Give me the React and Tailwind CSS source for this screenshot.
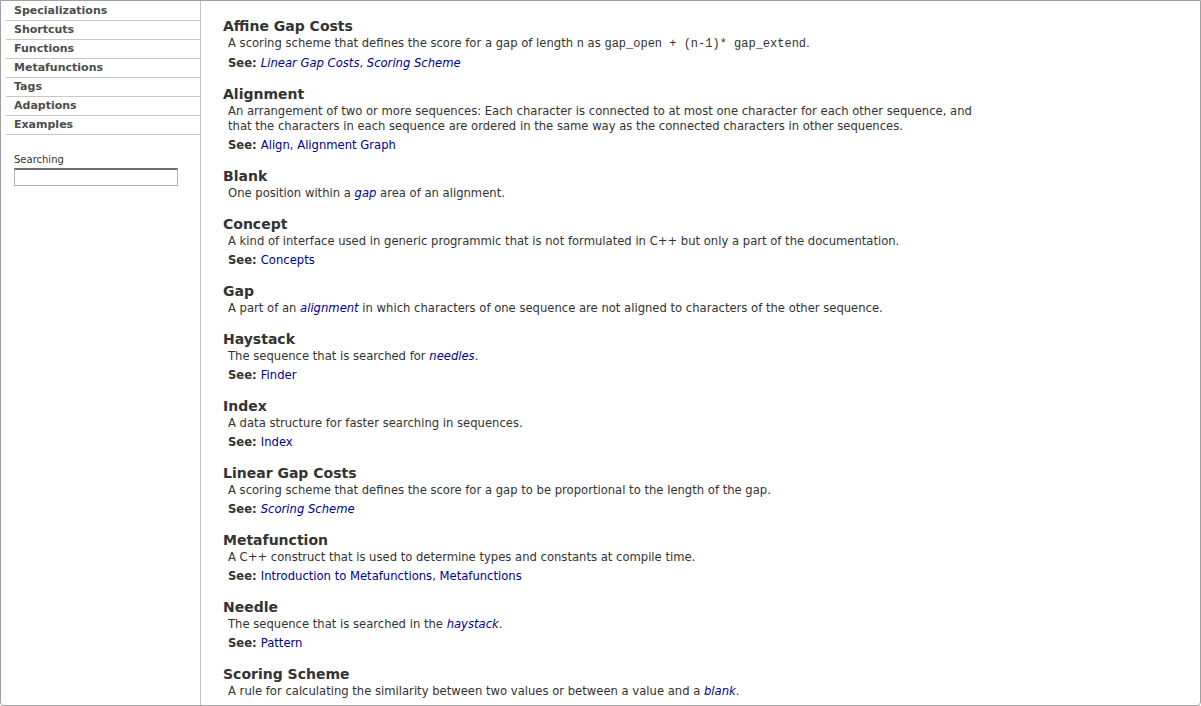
import React from 'react';

const navItems = ['Specializations', 'Shortcuts', 'Functions', 'Metafunctions', 'Tags', 'Adaptions', 'Examples'];

const Link = ({ children, italic }) => (
  <span className={italic ? 'italic text-[#00008f]' : 'text-[#00008f]'}>{children}</span>
);

const Code = ({ children }) => (
  <span className="font-['Liberation_Mono',monospace] text-[12px]">{children}</span>
);

const entries = [
  {
    title: 'Affine Gap Costs',
    desc: (
      <>
        A scoring scheme that defines the score for a gap of length <Code>n</Code> as <Code>gap_open + (n-1)* gap_extend</Code>.
      </>
    ),
    see: [
      ['Linear Gap Costs', true],
      ['Scoring Scheme', true],
    ],
  },
  {
    title: 'Alignment',
    desc: (
      <>
        An arrangement of two or more sequences: Each character is connected to at most one character for each other sequence, and
        <br />
        that the characters in each sequence are ordered in the same way as the connected characters in other sequences.
      </>
    ),
    see: [
      ['Align', false],
      ['Alignment Graph', false],
    ],
  },
  {
    title: 'Blank',
    desc: (
      <>
        One position within a <Link italic>gap</Link> area of an alignment.
      </>
    ),
  },
  {
    title: 'Concept',
    desc: 'A kind of interface used in generic programmic that is not formulated in C++ but only a part of the documentation.',
    see: [['Concepts', false]],
  },
  {
    title: 'Gap',
    desc: (
      <>
        A part of an <Link italic>alignment</Link> in which characters of one sequence are not aligned to characters of the other sequence.
      </>
    ),
  },
  {
    title: 'Haystack',
    desc: (
      <>
        The sequence that is searched for <Link italic>needles</Link>.
      </>
    ),
    see: [['Finder', false]],
  },
  {
    title: 'Index',
    desc: 'A data structure for faster searching in sequences.',
    see: [['Index', false]],
  },
  {
    title: 'Linear Gap Costs',
    desc: 'A scoring scheme that defines the score for a gap to be proportional to the length of the gap.',
    see: [['Scoring Scheme', true]],
  },
  {
    title: 'Metafunction',
    desc: 'A C++ construct that is used to determine types and constants at compile time.',
    see: [
      ['Introduction to Metafunctions', false],
      ['Metafunctions', false],
    ],
  },
  {
    title: 'Needle',
    desc: (
      <>
        The sequence that is searched in the <Link italic>haystack</Link>.
      </>
    ),
    see: [['Pattern', false]],
  },
  {
    title: 'Scoring Scheme',
    desc: (
      <>
        A rule for calculating the similarity between two values or between a value and a <Link italic>blank</Link>.
      </>
    ),
  },
];

const Entry = ({ entry }) => (
  <div className="mb-[14px]">
    <h3 className="text-[14px] leading-[18px] font-bold text-[#333]">{entry.title}</h3>
    <p className="mt-[1px] pl-[5px] text-[11.6px] leading-[15px] text-[#333]">{entry.desc}</p>
    {entry.see && (
      <p className="mt-[4px] pl-[5px] text-[11.6px] leading-[15px] text-[#333]">
        <span className="font-bold">See: </span>
        {entry.see.map(([label, italic], i) => (
          <React.Fragment key={label}>
            {i > 0 && ', '}
            <Link italic={italic}>{label}</Link>
          </React.Fragment>
        ))}
      </p>
    )}
  </div>
);

export default function App() {
  return (
    <div className="w-[1201px] h-[706px] flex border border-[#a0a0a0] rounded-b-[4px] overflow-hidden bg-white font-['DejaVu_Sans',Verdana,sans-serif]">
      {/* sidebar */}
      <div className="w-[200px] shrink-0 border-r border-[#c4c4c4]">
        <ul className="ml-[5px] pt-[1px]">
          {navItems.map((item) => (
            <li
              key={item}
              className="h-[19px] border-b border-[#c8c8c8] pl-[8px] text-[11px] leading-[18px] font-bold text-[#4d4d4d]"
            >
              {item}
            </li>
          ))}
        </ul>
        <div className="pl-[13px] pt-[18px]">
          <div className="text-[10px] leading-[13px] text-[#333]">Searching</div>
          <input
            type="text"
            className="mt-[2px] block w-[164px] h-[18px] border border-[#b0b0b0] border-t-2 border-t-[#707070] bg-white"
          />
        </div>
      </div>

      {/* glossary */}
      <div className="flex-1 pl-[22px] pt-[16px] overflow-hidden">
        {entries.map((entry) => (
          <Entry key={entry.title} entry={entry} />
        ))}
      </div>
    </div>
  );
}
